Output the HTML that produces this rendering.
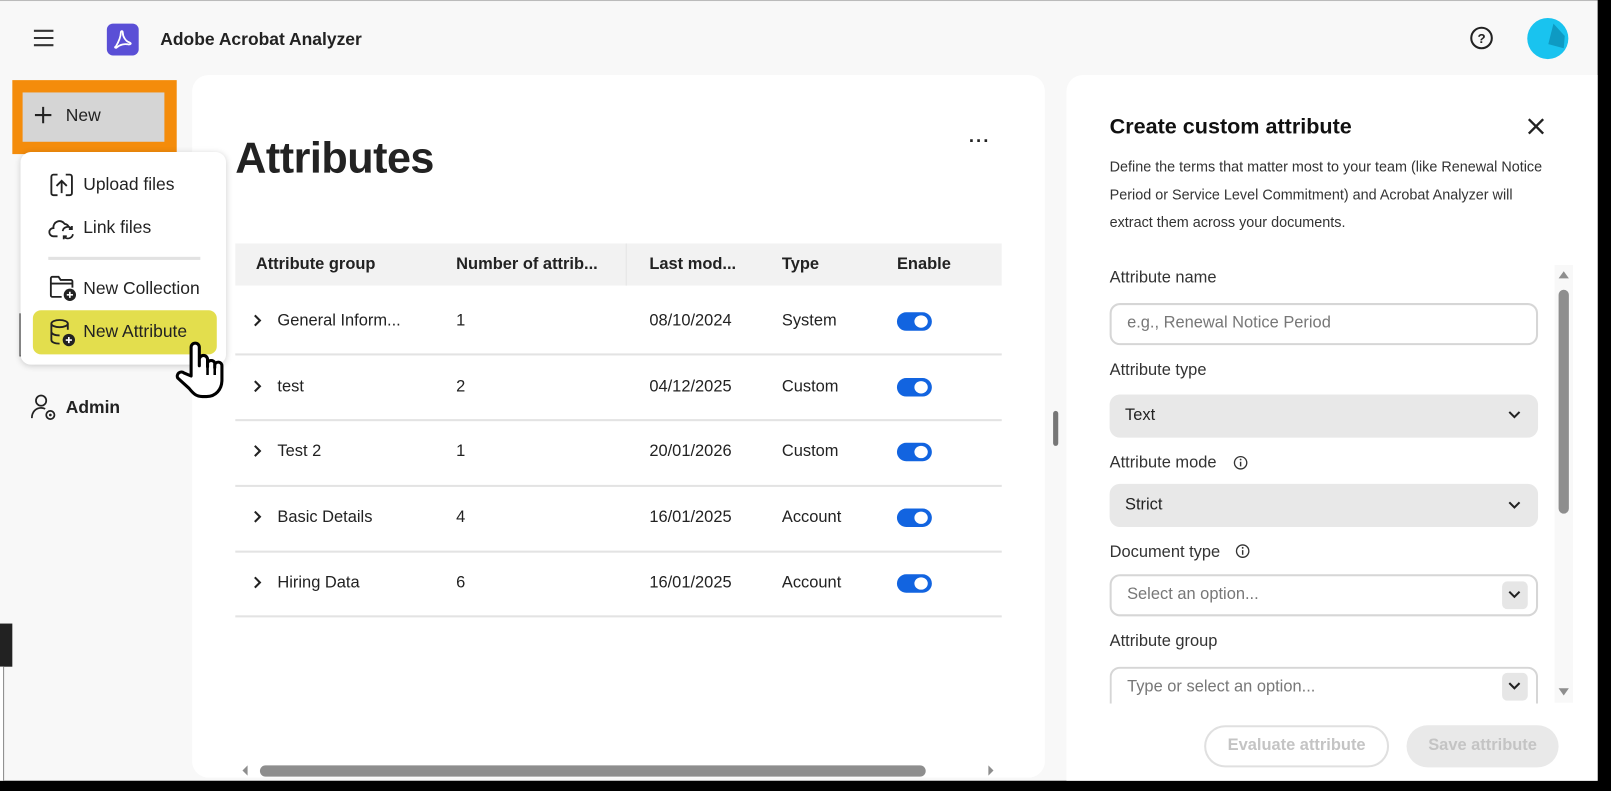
<!DOCTYPE html>
<html><head><meta charset="utf-8"><style>
*{box-sizing:border-box;margin:0;padding:0}
html,body{width:1611px;height:791px;overflow:hidden;background:#000}
#s{position:absolute;left:0;top:0;width:1568px;height:770px;transform:scale(1.02742,1.02727);transform-origin:0 0;background:#fff;font-family:"Liberation Sans",sans-serif;color:#222}
.a{position:absolute}
.t{position:absolute;white-space:nowrap;line-height:1}
</style></head><body><div id="s">
<div class="a" style="left:0;top:0;width:1555px;height:760px;background:#f8f8f8;border-top:1px solid #bbb"></div>
<div class="a" style="left:1555px;top:0;width:13px;height:770px;background:#000"></div>
<div class="a" style="left:0;top:760px;width:1568px;height:10px;background:#000"></div>
<div class="a" style="left:0;top:607px;width:12px;height:42px;background:#222"></div>
<div class="a" style="left:0;top:649px;width:4px;height:111px;background:#fff;border-right:1px solid #888"></div>

<svg class="a" style="left:32px;top:28px" width="22" height="18"><path d="M1 2H20M1 9H20M1 16H20" stroke="#333" stroke-width="2"/></svg>
<div class="a" style="left:104px;top:23px;width:31px;height:31px;background:#5a4fd6;border-radius:6px"></div>
<svg class="a" style="left:108px;top:27px" width="23" height="23" viewBox="0 0 24 24"><path d="M5 19c3-5 5-10 5-14 0-2 2-2 2 0 0 4 3 9 7 10 2 1 1 2-1 2-4-1-9 0-12 3-1 1-3 0-1-1z" fill="none" stroke="#fff" stroke-width="1.8"/></svg>
<div class="t" style="left:156px;top:30px;font-size:17px;font-weight:bold;color:#222">Adobe Acrobat Analyzer</div>
<svg class="a" style="left:1430px;top:25px" width="24" height="24"><circle cx="12" cy="12" r="10" fill="none" stroke="#222" stroke-width="2"/><text x="12" y="17" font-size="13" font-weight="bold" text-anchor="middle" font-family="Liberation Sans" fill="#222">?</text></svg>
<svg class="a" style="left:1486px;top:17px" width="41" height="41"><circle cx="20.5" cy="20.5" r="20" fill="#19c3ef"/><path d="M26 6 L37 18 L36 30 L21 26 Z" fill="#0e9ac3"/></svg>

<div class="a" style="left:12px;top:78px;width:160px;height:72px;background:#f48c0b"></div>
<div class="a" style="left:22px;top:90px;width:138px;height:48px;background:#d5d5d5"></div>
<svg class="a" style="left:33px;top:103px" width="18" height="18"><path d="M9 1V17M1 9H17" stroke="#222" stroke-width="2"/></svg>
<div class="t" style="left:64px;top:104px;font-size:17px;color:#222">New</div>
<div class="a" style="left:19px;top:305px;width:3px;height:42px;background:#222"></div>
<svg class="a" style="left:29px;top:383px" width="28" height="28" viewBox="0 0 28 28"><circle cx="11" cy="7" r="5" fill="none" stroke="#222" stroke-width="1.7"/><path d="M2 24c0-6 4-10 9-10 2 0 3 .5 4 1" fill="none" stroke="#222" stroke-width="1.7"/><circle cx="20" cy="21" r="4" fill="none" stroke="#222" stroke-width="1.7"/><circle cx="20" cy="21" r="1.3" fill="#222"/></svg>
<div class="t" style="left:64px;top:388px;font-size:17px;font-weight:bold;color:#222">Admin</div>

<div class="a" style="left:187px;top:73px;width:830px;height:684px;background:#fff;border-radius:16px"></div>
<div class="t" style="left:229px;top:133px;font-size:42px;font-weight:bold;color:#222;letter-spacing:-0.5px">Attributes</div>
<div class="t" style="left:943px;top:128px;font-size:18px;font-weight:bold;color:#222;letter-spacing:1px">···</div>
<div class="a" style="left:229px;top:237px;width:746px;height:41px;background:#f2f2f2"></div>
<div class="a" style="left:609px;top:237px;width:1px;height:41px;background:#e4e4e4"></div>
<div class="t" style="left:249px;top:250px;font-size:16px;font-weight:bold;color:#222">Attribute group</div>
<div class="t" style="left:444px;top:250px;font-size:16px;font-weight:bold;color:#222">Number of attrib...</div>
<div class="t" style="left:632px;top:250px;font-size:16px;font-weight:bold;color:#222">Last mod...</div>
<div class="t" style="left:761px;top:250px;font-size:16px;font-weight:bold;color:#222">Type</div>
<div class="t" style="left:873px;top:250px;font-size:16px;font-weight:bold;color:#222">Enable</div>

<div class="a" style="left:229px;top:344px;width:746px;height:2px;background:#e3e3e3"></div>
<div class="a" style="left:229px;top:408px;width:746px;height:2px;background:#e3e3e3"></div>
<div class="a" style="left:229px;top:472px;width:746px;height:2px;background:#e3e3e3"></div>
<div class="a" style="left:229px;top:536px;width:746px;height:2px;background:#e3e3e3"></div>
<div class="a" style="left:229px;top:599px;width:746px;height:2px;background:#e3e3e3"></div>

<div style="position:absolute;left:0;top:305px">
<svg class="a" style="left:245px;top:0" width="10" height="14"><path d="M3 2L8 7L3 12" fill="none" stroke="#222" stroke-width="2"/></svg>
<div class="t" style="left:270px;top:0;font-size:16px">General Inform...</div><div class="t" style="left:444px;top:0;font-size:16px">1</div><div class="t" style="left:632px;top:0;font-size:16px">08/10/2024</div><div class="t" style="left:761px;top:0;font-size:16px">System</div>
<div class="a" style="left:873px;top:-1px;width:34px;height:18px;border-radius:9px;background:#1264e0"></div><div class="a" style="left:890px;top:2px;width:13px;height:12px;border-radius:50%;background:#fff"></div>
</div>
<div style="position:absolute;left:0;top:369px">
<svg class="a" style="left:245px;top:0" width="10" height="14"><path d="M3 2L8 7L3 12" fill="none" stroke="#222" stroke-width="2"/></svg>
<div class="t" style="left:270px;top:0;font-size:16px">test</div><div class="t" style="left:444px;top:0;font-size:16px">2</div><div class="t" style="left:632px;top:0;font-size:16px">04/12/2025</div><div class="t" style="left:761px;top:0;font-size:16px">Custom</div>
<div class="a" style="left:873px;top:-1px;width:34px;height:18px;border-radius:9px;background:#1264e0"></div><div class="a" style="left:890px;top:2px;width:13px;height:12px;border-radius:50%;background:#fff"></div>
</div>
<div style="position:absolute;left:0;top:432px">
<svg class="a" style="left:245px;top:0" width="10" height="14"><path d="M3 2L8 7L3 12" fill="none" stroke="#222" stroke-width="2"/></svg>
<div class="t" style="left:270px;top:0;font-size:16px">Test 2</div><div class="t" style="left:444px;top:0;font-size:16px">1</div><div class="t" style="left:632px;top:0;font-size:16px">20/01/2026</div><div class="t" style="left:761px;top:0;font-size:16px">Custom</div>
<div class="a" style="left:873px;top:-1px;width:34px;height:18px;border-radius:9px;background:#1264e0"></div><div class="a" style="left:890px;top:2px;width:13px;height:12px;border-radius:50%;background:#fff"></div>
</div>
<div style="position:absolute;left:0;top:496px">
<svg class="a" style="left:245px;top:0" width="10" height="14"><path d="M3 2L8 7L3 12" fill="none" stroke="#222" stroke-width="2"/></svg>
<div class="t" style="left:270px;top:0;font-size:16px">Basic Details</div><div class="t" style="left:444px;top:0;font-size:16px">4</div><div class="t" style="left:632px;top:0;font-size:16px">16/01/2025</div><div class="t" style="left:761px;top:0;font-size:16px">Account</div>
<div class="a" style="left:873px;top:-1px;width:34px;height:18px;border-radius:9px;background:#1264e0"></div><div class="a" style="left:890px;top:2px;width:13px;height:12px;border-radius:50%;background:#fff"></div>
</div>
<div style="position:absolute;left:0;top:560px">
<svg class="a" style="left:245px;top:0" width="10" height="14"><path d="M3 2L8 7L3 12" fill="none" stroke="#222" stroke-width="2"/></svg>
<div class="t" style="left:270px;top:0;font-size:16px">Hiring Data</div><div class="t" style="left:444px;top:0;font-size:16px">6</div><div class="t" style="left:632px;top:0;font-size:16px">16/01/2025</div><div class="t" style="left:761px;top:0;font-size:16px">Account</div>
<div class="a" style="left:873px;top:-1px;width:34px;height:18px;border-radius:9px;background:#1264e0"></div><div class="a" style="left:890px;top:2px;width:13px;height:12px;border-radius:50%;background:#fff"></div>
</div>

<div class="a" style="left:253px;top:745px;width:648px;height:11px;border-radius:6px;background:#8e8e8e"></div>
<svg class="a" style="left:233px;top:744px" width="10" height="12"><path d="M8 1L3 6L8 11Z" fill="#8e8e8e"/></svg>
<svg class="a" style="left:960px;top:744px" width="10" height="12"><path d="M2 1L7 6L2 11Z" fill="#8e8e8e"/></svg>
<div class="a" style="left:1025px;top:400px;width:5px;height:34px;border-radius:3px;background:#777"></div>

<div class="a" style="left:20px;top:148px;width:200px;height:207px;background:#fff;border-radius:10px;box-shadow:0 1px 6px rgba(0,0,0,.18)"></div>
<svg class="a" style="left:48px;top:168px" width="24" height="24" viewBox="0 0 24 24"><path d="M8 2H4a2 2 0 0 0-2 2v16a2 2 0 0 0 2 2h4M16 2h4a2 2 0 0 1 2 2v16a2 2 0 0 1-2 2h-4M12 20V8M7 13l5-5 5 5" fill="none" stroke="#222" stroke-width="1.8"/></svg>
<div class="t" style="left:81px;top:171px;font-size:17px">Upload files</div>
<svg class="a" style="left:47px;top:211px" width="27" height="22" viewBox="0 0 27 22"><path d="M9 19H5a4 4 0 0 1 0-8 6 6 0 0 1 11-4 5 5 0 0 1 4 3" fill="none" stroke="#222" stroke-width="1.8"/><path d="M14 14a5 5 0 0 1 9-2M24 17a5 5 0 0 1-9 2M23 9v3h-3M15 22v-3h3" fill="none" stroke="#222" stroke-width="1.7"/></svg>
<div class="t" style="left:81px;top:213px;font-size:17px">Link files</div>
<div class="a" style="left:47px;top:250px;width:148px;height:3px;background:#e2e2e2"></div>
<svg class="a" style="left:48px;top:268px" width="27" height="26" viewBox="0 0 27 26"><path d="M12 21H3a1.5 1.5 0 0 1-1.5-1.5V3A1.5 1.5 0 0 1 3 1.5h6l2 3h10a1.5 1.5 0 0 1 1.5 1.5V12M1.5 8H22" fill="none" stroke="#222" stroke-width="1.8"/><circle cx="20" cy="19" r="6" fill="#222"/><path d="M20 16v6M17 19h6" stroke="#fff" stroke-width="1.6"/></svg>
<div class="t" style="left:81px;top:272px;font-size:17px">New Collection</div>
<div class="a" style="left:32px;top:302px;width:179px;height:43px;background:#e3de4d;border-radius:8px"></div>
<svg class="a" style="left:48px;top:310px" width="27" height="28" viewBox="0 0 27 28"><ellipse cx="10" cy="5" rx="8" ry="3.5" fill="none" stroke="#222" stroke-width="1.8"/><path d="M2 5v16c0 2 3 3.5 8 3.5M2 13c0 2 3 3.5 8 3.5M18 5v6" fill="none" stroke="#222" stroke-width="1.8"/><circle cx="19" cy="21" r="6" fill="#222"/><path d="M19 18v6M16 21h6" stroke="#fff" stroke-width="1.6"/></svg>
<div class="t" style="left:81px;top:314px;font-size:17px">New Attribute</div>
<svg class="a" style="left:165px;top:330px" width="55" height="62" viewBox="0 0 55 62"><path d="M21 36V8a4 4 0 0 1 8 0v18V20a4 4 0 0 1 8 0v7-4a4 4 0 0 1 7 0v5-2a3.5 3.5 0 0 1 7 0v14c0 9-6 16-15 16h-4c-6 0-9-3-13-8L8 38a4 4 0 0 1 6-5z" fill="#fff" stroke="#000" stroke-width="3" stroke-linejoin="round"/><path d="M37 27v8M44 28v7" stroke="#000" stroke-width="2.5"/></svg>

<div class="a" style="left:1038px;top:73px;width:517px;height:687px;background:#fff;border-top-left-radius:16px"></div>
<div class="t" style="left:1080px;top:113px;font-size:21px;font-weight:bold;color:#111">Create custom attribute</div>
<svg class="a" style="left:1486px;top:114px" width="18" height="18"><path d="M2 2L16 16M16 2L2 16" stroke="#222" stroke-width="2.3"/></svg>
<div class="a" style="left:1080px;top:149px;width:428px;font-size:14px;line-height:27px;color:#333">Define the terms that matter most to your team (like Renewal Notice Period or Service Level Commitment) and Acrobat Analyzer will extract them across your documents.</div>

<div class="t" style="left:1080px;top:263px;font-size:16px;color:#333">Attribute name</div>
<div class="a" style="left:1080px;top:295px;width:417px;height:41px;border:2px solid #d6d6d6;border-radius:10px"></div>
<div class="t" style="left:1097px;top:307px;font-size:16px;color:#777">e.g., Renewal Notice Period</div>

<div class="t" style="left:1080px;top:353px;font-size:16px;color:#333">Attribute type</div>
<div class="a" style="left:1080px;top:384px;width:417px;height:42px;background:#e8e8e8;border-radius:10px"></div>
<div class="t" style="left:1095px;top:397px;font-size:16px;color:#222">Text</div>
<svg class="a" style="left:1467px;top:399px" width="14" height="10"><path d="M2 2L7 7L12 2" fill="none" stroke="#222" stroke-width="2"/></svg>

<div class="t" style="left:1080px;top:443px;font-size:16px;color:#333">Attribute mode</div>
<svg class="a" style="left:1200px;top:443px" width="15" height="15"><circle cx="7.5" cy="7.5" r="6" fill="none" stroke="#333" stroke-width="1.3"/><path d="M7.5 6.5V11" stroke="#333" stroke-width="1.4"/><circle cx="7.5" cy="4.3" r=".9" fill="#333"/></svg>
<div class="a" style="left:1080px;top:471px;width:417px;height:42px;background:#e8e8e8;border-radius:10px"></div>
<div class="t" style="left:1095px;top:484px;font-size:16px;color:#222">Strict</div>
<svg class="a" style="left:1467px;top:487px" width="14" height="10"><path d="M2 2L7 7L12 2" fill="none" stroke="#222" stroke-width="2"/></svg>

<div class="t" style="left:1080px;top:530px;font-size:16px;color:#333">Document type</div>
<svg class="a" style="left:1202px;top:529px" width="15" height="15"><circle cx="7.5" cy="7.5" r="6" fill="none" stroke="#333" stroke-width="1.3"/><path d="M7.5 6.5V11" stroke="#333" stroke-width="1.4"/><circle cx="7.5" cy="4.3" r=".9" fill="#333"/></svg>
<div class="a" style="left:1080px;top:559px;width:417px;height:41px;border:2px solid #d6d6d6;border-radius:10px"></div>
<div class="t" style="left:1097px;top:571px;font-size:16px;color:#777">Select an option...</div>
<div class="a" style="left:1462px;top:566px;width:25px;height:27px;background:#e6e6e6;border-radius:5px"></div>
<svg class="a" style="left:1467px;top:574px" width="14" height="10"><path d="M2 2L7 7L12 2" fill="none" stroke="#222" stroke-width="2"/></svg>

<div class="t" style="left:1080px;top:617px;font-size:16px;color:#333">Attribute group</div>
<div class="a" style="left:1080px;top:649px;width:417px;height:36px;border:2px solid #d6d6d6;border-bottom:none;border-radius:10px 10px 0 0"></div>
<div class="t" style="left:1097px;top:661px;font-size:16px;color:#777">Type or select an option...</div>
<div class="a" style="left:1462px;top:655px;width:25px;height:27px;background:#e6e6e6;border-radius:5px"></div>
<svg class="a" style="left:1467px;top:663px" width="14" height="10"><path d="M2 2L7 7L12 2" fill="none" stroke="#222" stroke-width="2"/></svg>

<div class="a" style="left:1513px;top:258px;width:18px;height:426px;background:#f8f8f8"></div>
<svg class="a" style="left:1516px;top:262px" width="12" height="10"><path d="M1 9L6 2L11 9Z" fill="#8e8e8e"/></svg>
<div class="a" style="left:1517px;top:282px;width:10px;height:218px;border-radius:5px;background:#8e8e8e"></div>
<svg class="a" style="left:1516px;top:669px" width="12" height="10"><path d="M1 1L6 8L11 1Z" fill="#8e8e8e"/></svg>

<div class="a" style="left:1172px;top:706px;width:180px;height:41px;border:2px solid #e0e0e0;border-radius:21px"></div>
<div class="t" style="left:1172px;top:718px;width:180px;text-align:center;font-size:16px;font-weight:bold;color:#c4c4c4">Evaluate attribute</div>
<div class="a" style="left:1369px;top:706px;width:148px;height:41px;background:#e9e9e9;border-radius:21px"></div>
<div class="t" style="left:1369px;top:718px;width:148px;text-align:center;font-size:16px;font-weight:bold;color:#c4c4c4">Save attribute</div>
</div></body></html>
